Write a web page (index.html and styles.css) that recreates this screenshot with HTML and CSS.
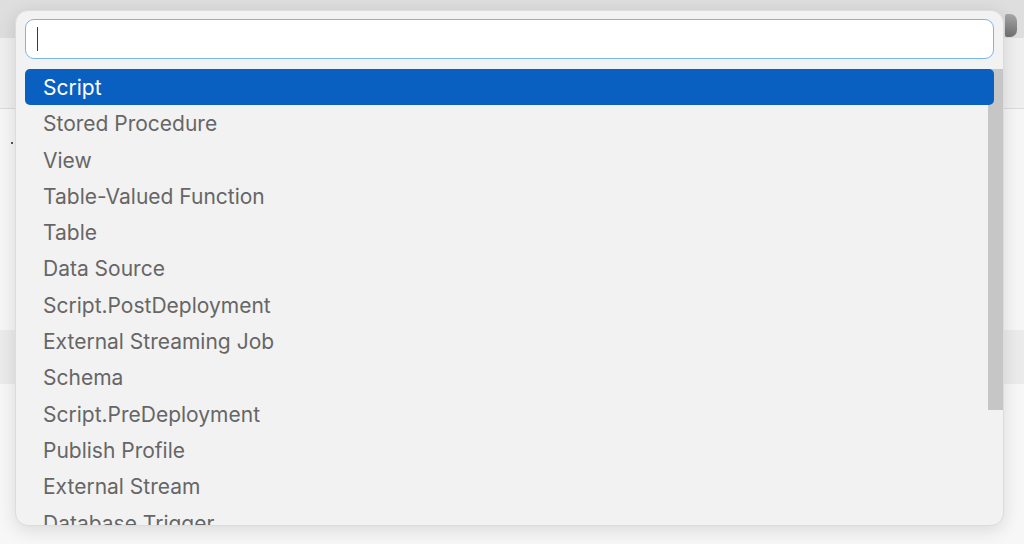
FILE: index.html
```html
<!DOCTYPE html>
<html lang="en">
<head>
    <meta charset="UTF-8">
    <meta name="viewport" content="width=device-width, initial-scale=1.0">
    <title>Add Item</title>
    <link rel="stylesheet" href="styles.css">
</head>
<body>
    <div class="backdrop">
        <div class="toolbar">
            <span class="toolbar-icon"></span>
        </div>
        <div class="tabs"></div>
        <div class="editor">
            <span class="dot"></span>
        </div>
        <div class="sidebar-row"></div>
        <div class="editor-rest"></div>
    </div>

    <div class="picker">
        <div class="search">
            <span class="caret"></span>
        </div>
        <div class="list">
            <ul class="items">
                <li class="item selected">Script</li>
                <li class="item">Stored Procedure</li>
                <li class="item">View</li>
                <li class="item">Table-Valued Function</li>
                <li class="item">Table</li>
                <li class="item">Data Source</li>
                <li class="item">Script.PostDeployment</li>
                <li class="item">External Streaming Job</li>
                <li class="item">Schema</li>
                <li class="item">Script.PreDeployment</li>
                <li class="item">Publish Profile</li>
                <li class="item">External Stream</li>
                <li class="item">Database Trigger</li>
            </ul>
            <div class="scroll-thumb"></div>
        </div>
    </div>
</body>
</html>
```

FILE: styles.css
```css
body {
    margin: 0;
    width: 1024px;
    height: 544px;
    overflow: hidden;
    font-family: Inter, "Noto Sans", sans-serif;
    background: #f7f7f7;
    position: relative;
}
/* Backdrop (window behind the picker) */
.backdrop {
    display: flex;
    flex-direction: column;
    height: 100%;
}
.toolbar {
    height: 38px;
    background: #dedede;
    position: relative;
}
.toolbar-icon {
    position: absolute;
    right: 7px;
    top: 14px;
    width: 12px;
    height: 23px;
    border-radius: 2px 7px 7px 2px;
    background: linear-gradient(180deg, #a8a8a8, #707070);
}
.tabs {
    height: 70px;
    background: #efefef;
    border-bottom: 1px solid #dadada;
}
.editor {
    height: 221px;
    background: #f6f6f6;
    position: relative;
}
.dot {
    position: absolute;
    left: 11px;
    top: 33px;
    width: 2px;
    height: 2px;
    background: #555;
}
.sidebar-row {
    height: 54px;
    background: #ebebeb;
}
.editor-rest {
    flex: 1;
    background: #f7f7f7;
}
/* Picker */
.picker {
    position: absolute;
    left: 15px;
    top: 10px;
    width: 989px;
    height: 516px;
    padding: 8px 9px 0 9px;
    box-sizing: border-box;
    background: #f2f2f2;
    border: 1px solid #dcdcdc;
    border-radius: 13px;
    box-shadow: 0 4px 18px rgba(0, 0, 0, 0.12);
    overflow: hidden;
    display: flex;
    flex-direction: column;
}
.search {
    height: 40px;
    flex-shrink: 0;
    box-sizing: border-box;
    background: #fff;
    border: 1.5px solid #7ab6ee;
    border-radius: 9px;
    position: relative;
}
.caret {
    position: absolute;
    left: 11px;
    top: 7px;
    width: 1px;
    height: 24px;
    background: #3a3a3a;
}
.list {
    margin-top: 10px;
    flex: 1;
    position: relative;
}
.items {
    list-style: none;
    margin: 0;
    padding: 0;
}
.item {
    height: 36.3px;
    box-sizing: border-box;
    padding: 2px 0 0 18px;
    line-height: 34.3px;
    font-size: 21px;
    color: #666;
    white-space: nowrap;
    position: relative;
    z-index: 1;
}
.item.selected {
    background: #0a60c0;
    color: #fff;
    border-radius: 5px;
}
.scroll-thumb {
    position: absolute;
    right: -9px;
    top: 0;
    width: 15px;
    height: 341px;
    background: #c6c6c6;
}
```
